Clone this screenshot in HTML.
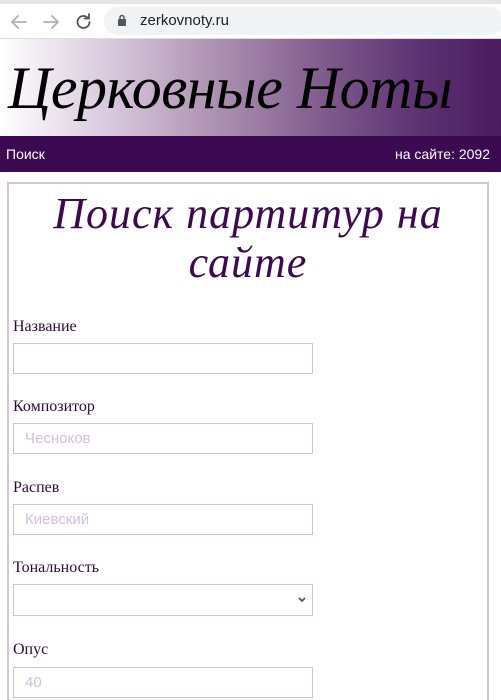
<!DOCTYPE html>
<html><head><meta charset="utf-8"><style>
*{margin:0;padding:0;box-sizing:border-box}
html,body{width:501px;height:700px;overflow:hidden}
body{background:#fff;font-family:"Liberation Sans",sans-serif;position:relative}
.abs{position:absolute}
.chrome{left:0;top:0;width:501px;height:39px;background:#fff;border-bottom:1px solid #ddd}
.strip{left:0;top:0;width:501px;height:4px;background:#e4e4e8}
.url{left:104px;top:7px;width:400px;height:28px;border-radius:14px;background:#f1f3f4}
.urltext{left:140px;top:12px;font-size:15px;color:#222}
.hdr{left:0;top:39px;width:501px;height:97px;background:linear-gradient(90deg,#fff 0%,#d8c8dc 22%,#a98cae 45%,#7f5a8c 65%,#5a3070 85%,#4a1c60 100%)}
.htitle{left:8px;top:54px;font-family:"Liberation Serif",serif;font-style:italic;font-size:60px;color:#000;letter-spacing:-0.5px;white-space:nowrap}
.nav{left:0;top:136px;width:501px;height:36px;background:#3c0a50;color:#fff;font-size:14px}
.box{left:7px;top:182px;width:482px;height:530px;border:2px solid #d6c4dd}
.h1{left:0;top:189px;width:496px;text-align:center;font-family:"Liberation Serif",serif;font-style:italic;font-size:44px;letter-spacing:1px;line-height:49px;color:#3d0a50}
.lbl{left:13px;font-family:"Liberation Serif",serif;font-size:16px;color:#2e0a3c}
.inp{left:13px;width:300px;height:31px;border:1px solid #d2bfd9;font-size:15px;color:#d3bfdd;padding:6px 0 0 11px}
</style></head><body>
<div class="abs chrome"></div><div class="abs strip"></div>
<svg class="abs" style="left:8px;top:12px" width="90" height="20" viewBox="0 0 90 20" fill="none" stroke-width="1.8" stroke-linecap="round">
<path d="M18 10H4M10 4L4 10l6 6" stroke="#b0b0b0"/>
<path d="M36 10h14M44 4l6 6-6 6" stroke="#b0b0b0"/>
<path d="M80 6a6 6 0 1 0 1.5 4" stroke="#555"/><path d="M81 2v4.5h-4.5" stroke="#555"/>
</svg>
<div class="abs url"></div>
<svg class="abs" style="left:117px;top:14px" width="10" height="13" viewBox="0 0 10 13"><rect x="1" y="5" width="8" height="7" rx="1" fill="#555"/><path d="M3 5V3.5a2 2 0 0 1 4 0V5" stroke="#555" stroke-width="1.5" fill="none"/></svg>
<div class="abs urltext">zerkovnoty.ru</div>
<div class="abs hdr"></div>
<div class="abs htitle">Церковные Ноты</div>
<div class="abs nav"><span class="abs" style="left:6px;top:10px">Поиск</span><span class="abs" style="right:11px;top:10px">на сайте: 2092</span></div>
<div class="abs box"></div>
<div class="abs h1">Поиск партитур на<br>сайте</div>
<div class="abs lbl" style="top:318px">Название</div>
<div class="abs inp" style="top:343px"></div>
<div class="abs lbl" style="top:398px">Композитор</div>
<div class="abs inp" style="top:423px">Чесноков</div>
<div class="abs lbl" style="top:479px">Распев</div>
<div class="abs inp" style="top:504px">Киевский</div>
<div class="abs lbl" style="top:559px">Тональность</div>
<div class="abs inp" style="top:584px;height:32px"></div>
<svg class="abs" style="left:297px;top:596px" width="10" height="8" viewBox="0 0 10 8"><path d="M2 2l3 3 3-3" stroke="#555" stroke-width="1.8" fill="none"/></svg>
<div class="abs lbl" style="top:641px">Опус</div>
<div class="abs inp" style="top:667px">40</div>
</body></html>
